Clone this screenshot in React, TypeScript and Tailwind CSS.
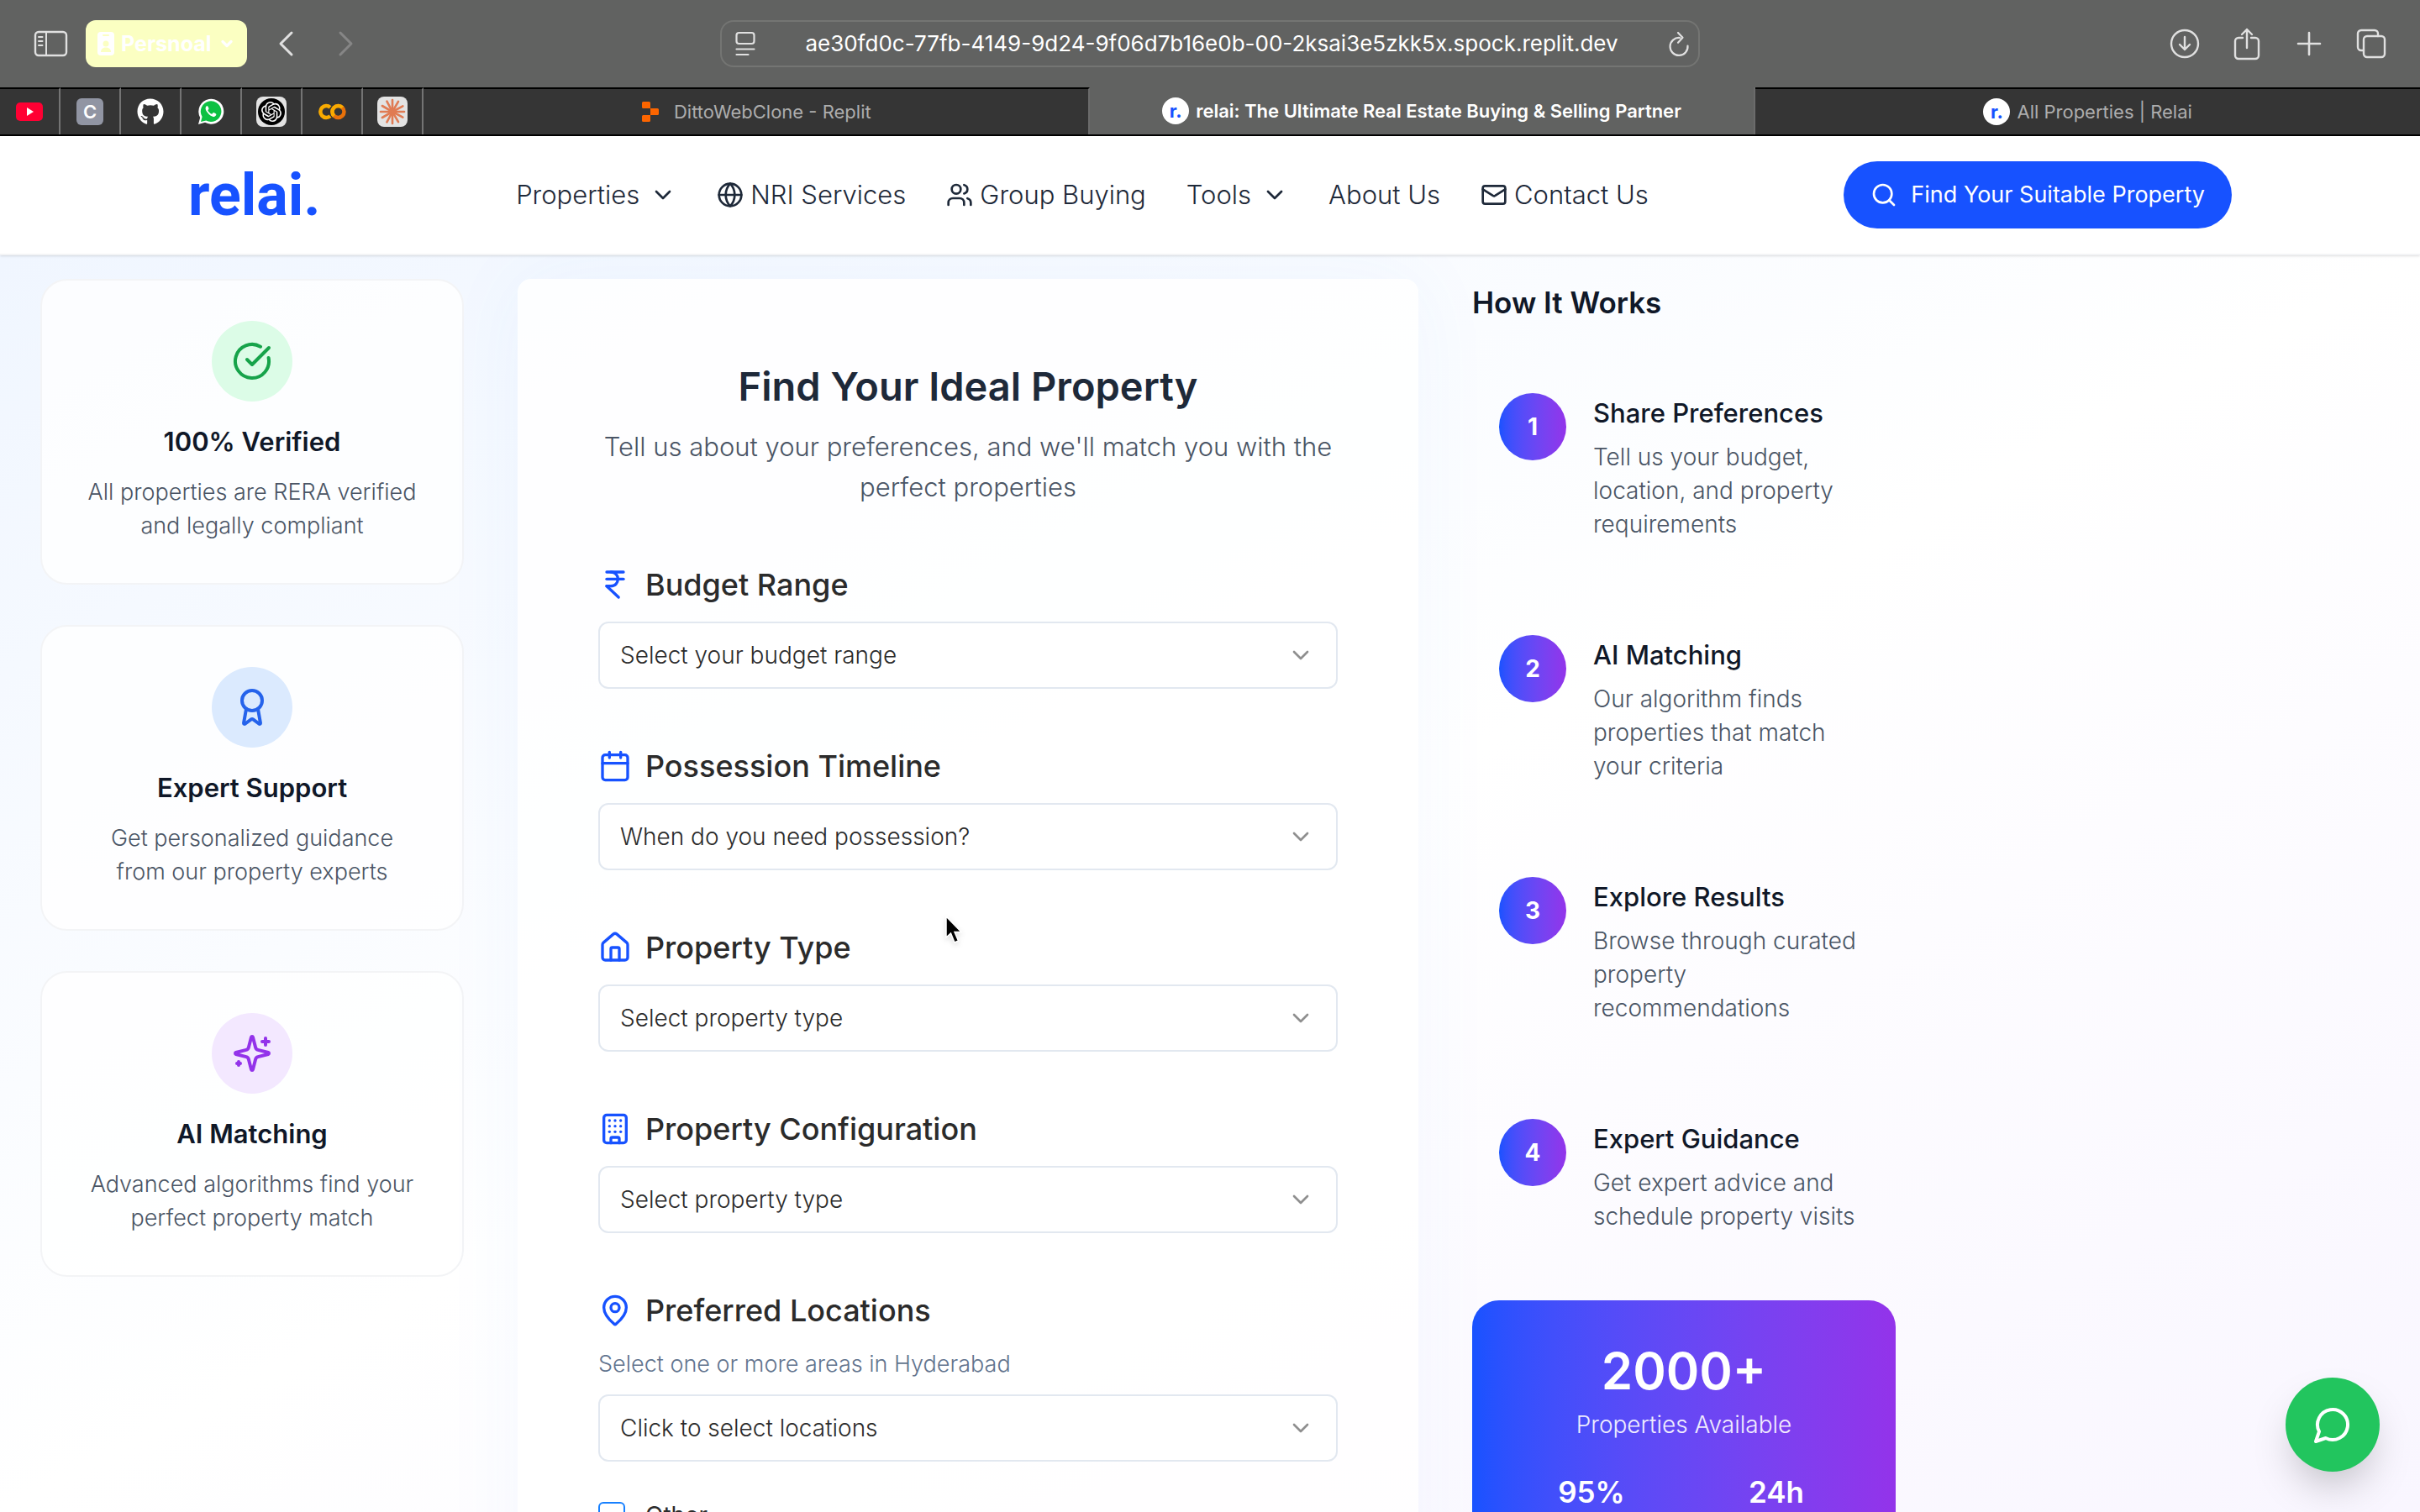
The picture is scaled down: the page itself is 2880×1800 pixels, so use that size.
import React from "react";
import {
  Award,
  Building,
  Calendar,
  ChevronDown,
  CircleCheckBig,
  Globe,
  House,
  IndianRupee,
  Mail,
  MapPin,
  Search,
  Users,
} from "lucide-react";
import { FaGithub } from "react-icons/fa";
import { SiOpenai, SiReplit } from "react-icons/si";

type IconType = React.ComponentType<{ className?: string }>;

/* ---------- Icons ---------- */

function ChromeIcon({ className, viewBox = "0 0 24 24", children }: { className: string; viewBox?: string; children: React.ReactNode }) {
  return (
    <svg
      aria-hidden="true"
      viewBox={viewBox}
      className={className}
      fill="none"
      stroke="currentColor"
      strokeWidth={2}
      strokeLinecap="round"
      strokeLinejoin="round"
    >
      {children}
    </svg>
  );
}

function Sparkles({ className = "" }: { className?: string }) {
  return (
    <ChromeIcon className={className}>
      <path d="M9.937 15.5A2 2 0 0 0 8.5 14.063l-6.135-1.582a.5.5 0 0 1 0-.962L8.5 9.936A2 2 0 0 0 9.937 8.5l1.582-6.135a.5.5 0 0 1 .963 0L14.063 8.5A2 2 0 0 0 15.5 9.937l6.135 1.581a.5.5 0 0 1 0 .964L15.5 14.063a2 2 0 0 0-1.437 1.437l-1.582 6.135a.5.5 0 0 1-.963 0z" />
      <path d="M20 3v4M22 5h-4M4 17v2M5 18H3" />
    </ChromeIcon>
  );
}

function ChatBubble({ className = "" }: { className?: string }) {
  return (
    <ChromeIcon className={className}>
      <path d="M7.900 20A9 9 0 1 0 4 16.100L2 22Z" />
    </ChromeIcon>
  );
}

/* ---------- Browser chrome ---------- */

function Toolbar() {
  return (
    <div className="grid h-[104px] shrink-0 grid-cols-[1fr_minmax(0,1166px)_1fr] items-center bg-[#616261] text-[#e0e0e0]">
      <div className="flex items-center pl-10">
        <button aria-label="Toggle sidebar" className="flex">
          <ChromeIcon className="h-8 w-[42px]" viewBox="0 0 42 32">
            <rect x="2" y="2" width="37" height="28" rx="4" strokeWidth="2.4" />
            <path d="M15 2v28M6 8h4.500M6 13h4.500M6 18h4.500" strokeWidth="2" />
          </ChromeIcon>
        </button>
        <button className="ml-5 flex h-14 items-center gap-2 rounded-xl bg-[#fbffc2] px-3.5 text-[25px] leading-8 font-bold text-white">
          <svg aria-hidden="true" viewBox="0 0 20 28" className="h-7 w-5">
            <rect width="20" height="28" rx="4" fill="#fff" />
            <rect x="6" y="3" width="8" height="2" rx="1" fill="#fbffc2" />
            <circle cx="10" cy="14" r="3.500" fill="#fbffc2" />
            <path d="M4 24c0-4 3-5.500 6-5.500s6 1.500 6 5.500z" fill="#fbffc2" />
          </svg>
          Persnoal
          <ChevronDown className="size-5" strokeWidth={4} />
        </button>
        <button aria-label="Back" className="ml-9 flex">
          <ChromeIcon className="h-8 w-5" viewBox="0 0 20 32">
            <path d="M17 3 4 16l13 13" strokeWidth="3" />
          </ChromeIcon>
        </button>
        <button aria-label="Forward" className="ml-[52px] flex text-[#868686]">
          <ChromeIcon className="h-8 w-5" viewBox="0 0 20 32">
            <path d="m3 3 13 13L3 29" strokeWidth="3" />
          </ChromeIcon>
        </button>
      </div>

      <div className="flex h-14 items-center justify-between rounded-2xl border-2 border-[#747573] pr-2.5 pl-4">
        <button aria-label="Page menu" className="flex">
          <ChromeIcon className="h-8 w-6" viewBox="0 0 24 32">
            <rect x="1.500" y="3" width="21" height="13" rx="3" strokeWidth="2.200" />
            <path d="M1.500 22.500h21M1.500 29h14" strokeWidth="2.200" />
          </ChromeIcon>
        </button>
        <input
          aria-label="Address"
          readOnly
          value="ae30fd0c-77fb-4149-9d24-9f06d7b16e0b-00-2ksai3e5zkk5x.spock.replit.dev"
          className="min-w-0 flex-1 bg-transparent text-center text-[26px] leading-8 text-white outline-none"
        />
        <button aria-label="Reload" className="flex">
          <ChromeIcon className="h-8 w-[26px]" viewBox="0 0 26 32">
            <path d="M14 9a10.500 10.500 0 1 0 9.500 9.500" strokeWidth="2.200" />
            <path d="m12 3 5.500 5.800-5.500 6" strokeWidth="2.200" />
          </ChromeIcon>
        </button>
      </div>

      <div className="flex items-center justify-end gap-[38px] pr-10">
        <button aria-label="Downloads" className="flex">
          <ChromeIcon className="size-9" viewBox="0 0 36 36">
            <circle cx="18" cy="18" r="16" strokeWidth="2.400" />
            <path d="M18 10v15m-6-6 6 6 6-6" strokeWidth="2.400" />
          </ChromeIcon>
        </button>
        <button aria-label="Share" className="flex">
          <ChromeIcon className="h-10 w-9" viewBox="0 0 36 40">
            <path d="M13 13H8a4 4 0 0 0-4 4v17a4 4 0 0 0 4 4h20a4 4 0 0 0 4-4V17a4 4 0 0 0-4-4h-5" strokeWidth="2.400" />
            <path d="M18 25V3m-6 6 6-6 6 6" strokeWidth="2.400" />
          </ChromeIcon>
        </button>
        <button aria-label="New tab" className="flex">
          <ChromeIcon className="h-8 w-9" viewBox="0 0 36 32">
            <path d="M18 3v26M5 16h26" strokeWidth="2.600" />
          </ChromeIcon>
        </button>
        <button aria-label="Show all tabs" className="flex">
          <ChromeIcon className="size-9" viewBox="0 0 36 36">
            <rect x="9" y="9" width="25" height="25" rx="4" strokeWidth="2.400" />
            <path d="M9 26H6a4 4 0 0 1-4-4V6a4 4 0 0 1 4-4h16a4 4 0 0 1 4 4v3" strokeWidth="2.400" />
          </ChromeIcon>
        </button>
      </div>
    </div>
  );
}

const rays = [0, 30, 62, 90, 118, 150, 180, 208, 240, 270, 300, 332];

const pinned: { name: string; icon: React.ReactNode }[] = [
  {
    name: "YouTube",
    icon: (
      <svg aria-hidden="true" viewBox="0 0 32 22" className="h-[22px] w-8">
        <rect width="32" height="22" rx="5" fill="#ff0033" />
        <path d="m13 6 8 5-8 5z" fill="#fff" />
      </svg>
    ),
  },
  {
    name: "C",
    icon: (
      <span className="flex size-8 items-center justify-center rounded-md bg-[#9195a3] text-[22px] leading-8 font-semibold text-white">C</span>
    ),
  },
  { name: "GitHub", icon: <FaGithub className="size-8 text-white" /> },
  {
    name: "WhatsApp",
    icon: (
      <svg aria-hidden="true" viewBox="0 0 32 32" className="size-8">
        <path d="M1 31l2.200-8A15 15 0 1 1 9 28.800z" fill="#fff" />
        <path d="M4 28l1.600-6A12.300 12.300 0 1 1 10.200 26.400z" fill="#0dc143" />
        <path
          d="M11.500 9c-.6 0-2 1.200-1.900 3.200.2 3 4.600 8.600 9.100 9.700 1.800.4 3.600-1 3.700-2.900 0-.5-3-2-3.500-2s-1.200 1.900-1.900 1.800c-1.500-.4-4-2.700-4.600-4.300-.2-.6 1.200-1.500 1.100-2.100-.1-.8-1-3.400-2-3.400z"
          fill="#fff"
        />
      </svg>
    ),
  },
  {
    name: "ChatGPT",
    icon: (
      <span className="flex size-9 items-center justify-center rounded-lg bg-[#e3e3e3]">
        <span className="flex size-8 items-center justify-center rounded-full bg-black">
          <SiOpenai className="size-6 text-white" />
        </span>
      </span>
    ),
  },
  {
    name: "Colab",
    icon: (
      <svg aria-hidden="true" viewBox="0 0 34 20" className="h-5 w-[34px]" fill="none" strokeWidth="4.500">
        <path d="M15 4.800a7 7 0 1 0 0 10.400" stroke="#f9ab00" />
        <circle cx="24.500" cy="10" r="7" stroke="#e8710a" />
        <path d="M19.500 15a7 7 0 0 1 10-10" stroke="#f9ab00" />
      </svg>
    ),
  },
  {
    name: "Claude",
    icon: (
      <span className="flex size-9 items-center justify-center rounded-lg bg-[#e3e3e3]">
        <svg aria-hidden="true" viewBox="-16 -16 32 32" className="size-8" stroke="#e07b53" strokeWidth="2.600" strokeLinecap="round">
          {rays.map((a) => (
            <line key={a} x1="0" y1="0" x2="0" y2="-14" transform={`rotate(${a})`} />
          ))}
          <circle r="3" fill="#e07b53" />
        </svg>
      </span>
    ),
  },
];

function RelaiMark() {
  return (
    <span className="flex size-8 items-center justify-center rounded-full bg-white text-[22px] leading-8 font-bold text-[#1752ff]">r.</span>
  );
}

function TabStrip() {
  return (
    <div className="flex h-[58px] shrink-0 border-b-2 border-black bg-[#353535] text-[22px] leading-8">
      {pinned.map((p) => (
        <button
          key={p.name}
          aria-label={p.name}
          className="flex w-[72px] shrink-0 items-center justify-center border-t-2 border-r-2 border-t-black border-r-[#747474]"
        >
          {p.icon}
        </button>
      ))}
      <button className="flex flex-1 items-center justify-center gap-4 border-t-2 border-r-2 border-t-black border-r-[#6b6b6b] text-[#adadad]">
        <SiReplit className="size-6 text-[#fc6500]" />
        DittoWebClone - Replit
      </button>
      <button className="flex flex-1 items-center justify-center gap-2 border-r-2 border-[#6b6b6b] bg-[#616261] font-semibold text-white">
        <RelaiMark />
        relai: The Ultimate Real Estate Buying &amp; Selling Partner
      </button>
      <button className="flex flex-1 items-center justify-center gap-2 border-t-2 border-black text-[#adadad]">
        <RelaiMark />
        All Properties | Relai
      </button>
    </div>
  );
}

/* ---------- Site ---------- */

const navItems: { label: string; icon?: IconType; menu?: boolean }[] = [
  { label: "Properties", menu: true },
  { label: "NRI Services", icon: Globe },
  { label: "Group Buying", icon: Users },
  { label: "Tools", menu: true },
  { label: "About Us" },
  { label: "Contact Us", icon: Mail },
];

function SiteHeader() {
  return (
    <header className="z-10 flex h-[142px] shrink-0 items-center justify-between border-b-2 border-gray-100 bg-white px-56 shadow-sm">
      <a href="#" className="font-['Roboto',sans-serif] text-[70px] leading-[80px] font-bold text-[#1752ff]">
        relai.
      </a>
      <nav className="flex items-center gap-12 text-[31px] leading-12 font-light text-gray-800">
        {navItems.map(({ label, icon: Icon, menu }) =>
          menu ? (
            <button key={label} className="flex items-center gap-3 whitespace-nowrap">
              {label}
              <ChevronDown className="size-8" />
            </button>
          ) : (
            <a key={label} href="#" className="flex items-center gap-2 whitespace-nowrap">
              {Icon && <Icon className="size-8" />}
              {label}
            </a>
          ),
        )}
      </nav>
      <a
        href="#"
        className="flex h-20 items-center gap-4 rounded-full bg-[#1752ff] px-8 text-[27px] leading-10 whitespace-nowrap text-white"
      >
        <Search className="size-8" />
        Find Your Suitable Property
      </a>
    </header>
  );
}

const features: { title: string; lines: [string, string]; icon: IconType; tone: string }[] = [
  {
    title: "100% Verified",
    lines: ["All properties are RERA verified", "and legally compliant"],
    icon: CircleCheckBig,
    tone: "bg-[#dcfce7] text-[#16a34a]",
  },
  {
    title: "Expert Support",
    lines: ["Get personalized guidance", "from our property experts"],
    icon: Award,
    tone: "bg-[#dbeafe] text-[#2563eb]",
  },
  {
    title: "AI Matching",
    lines: ["Advanced algorithms find your", "perfect property match"],
    icon: Sparkles,
    tone: "bg-[#f3e8ff] text-[#9333ea]",
  },
];

function Features() {
  return (
    <aside className="flex flex-col gap-12">
      {features.map(({ title, lines, icon: Icon, tone }) => (
        <article
          key={title}
          className="flex flex-col items-center rounded-4xl border-2 border-[#f3f4f6] bg-white/80 py-12 text-center"
        >
          <div className={`flex size-24 items-center justify-center rounded-full ${tone}`}>
            <Icon className="size-12" />
          </div>
          <h3 className="mt-6 text-[31px] leading-12 font-semibold text-gray-900">{title}</h3>
          <p className="mt-4 text-[27px] leading-10 font-light whitespace-nowrap text-gray-600">
            {lines[0]}
            <br />
            {lines[1]}
          </p>
        </article>
      ))}
    </aside>
  );
}

const fields: { id: string; label: string; placeholder: string; icon: IconType; hint?: string }[] = [
  { id: "budget", label: "Budget Range", placeholder: "Select your budget range", icon: IndianRupee },
  { id: "possession", label: "Possession Timeline", placeholder: "When do you need possession?", icon: Calendar },
  { id: "type", label: "Property Type", placeholder: "Select property type", icon: House },
  { id: "configuration", label: "Property Configuration", placeholder: "Select property type", icon: Building },
  {
    id: "locations",
    label: "Preferred Locations",
    placeholder: "Click to select locations",
    icon: MapPin,
    hint: "Select one or more areas in Hyderabad",
  },
];

function PropertyForm() {
  return (
    <section className="col-span-2 rounded-2xl bg-white/85 p-24 shadow-[0_0_100px_rgba(59,130,246,0.05)]">
      <header className="text-center">
        <h1 className="text-[47px] leading-16 font-semibold text-gray-800">Find Your Ideal Property</h1>
        <p className="mt-4 text-[31px] leading-12 font-light text-gray-600">
          Tell us about your preferences, and we'll match you with the perfect properties
        </p>
      </header>
      <form className="mt-16 flex flex-col gap-16">
        {fields.map(({ id, label, placeholder, icon: Icon, hint }) => (
          <div key={id} className="flex flex-col gap-4">
            <label htmlFor={id} className="flex items-center gap-4 text-[36px] leading-14 font-medium text-[#2b2b2b]">
              <Icon className="size-10 text-[#1752ff]" />
              {label}
            </label>
            {hint && <p className="text-[27px] leading-10 font-light text-slate-500">{hint}</p>}
            <div className="relative">
              <select
                id={id}
                defaultValue=""
                className="h-20 w-full appearance-none rounded-xl border-2 border-slate-200 bg-white px-6 text-[28px] leading-10 font-light text-[#2b2b2b]"
              >
                <option value="">{placeholder}</option>
              </select>
              <ChevronDown className="pointer-events-none absolute top-6 right-7 size-8 text-[#8f8f8f]" />
            </div>
            {id === "locations" && (
              <label className="mt-8 flex items-center gap-6 text-[28px] leading-8 text-[#2b2b2b]">
                <input type="checkbox" className="size-8 appearance-none rounded-md border-2 border-[#1780ff] bg-white" />
                Other
              </label>
            )}
          </div>
        ))}
      </form>
    </section>
  );
}

const steps = [
  { title: "Share Preferences", text: "Tell us your budget, location, and property requirements" },
  { title: "AI Matching", text: "Our algorithm finds properties that match your criteria" },
  { title: "Explore Results", text: "Browse through curated property recommendations" },
  { title: "Expert Guidance", text: "Get expert advice and schedule property visits" },
];

function HowItWorks() {
  return (
    <aside className="flex flex-col gap-12">
      <h2 className="text-[35px] leading-14 font-semibold text-gray-900">How It Works</h2>
      {steps.map(({ title, text }, i) => (
        <article key={title} className="flex items-start gap-8 p-8">
          <span className="flex size-20 shrink-0 items-center justify-center rounded-full bg-linear-to-r from-[#1752ff] to-[#9333ea] text-[28px] leading-10 font-bold text-white">
            {i + 1}
          </span>
          <div className="min-w-0">
            <h3 className="text-[31px] leading-12 font-medium text-gray-900">{title}</h3>
            <p className="mt-2 text-[28px] leading-10 font-light text-gray-600">{text}</p>
          </div>
        </article>
      ))}
      <div className="rounded-4xl bg-linear-to-r from-[#1752ff] to-[#9333ea] p-12 text-center text-white">
        <p className="text-[60px] leading-[72px] font-semibold">2000+</p>
        <p className="mt-2 text-[28px] leading-10 font-light text-white/90">Properties Available</p>
        <div className="mt-8 grid grid-cols-2 gap-8 text-[35px] leading-14 font-semibold">
          <p>95%</p>
          <p>24h</p>
        </div>
      </div>
    </aside>
  );
}

export default function App() {
  return (
    <div className="relative flex h-screen flex-col overflow-hidden bg-white font-['Inter',sans-serif]">
      <Toolbar />
      <TabStrip />
      <SiteHeader />
      <main className="min-h-0 flex-1 overflow-hidden bg-linear-to-br from-[#f0f6ff] via-white to-[#f9f6ff]">
        <div className="grid max-w-[2304px] grid-cols-4 items-start gap-16 px-12 pt-7">
          <Features />
          <PropertyForm />
          <HowItWorks />
        </div>
      </main>
      <button
        aria-label="Chat with us"
        className="absolute right-12 bottom-12 flex size-28 items-center justify-center rounded-full bg-[#22c55e] text-white shadow-2xl"
      >
        <ChatBubble className="size-12" />
      </button>
      <svg
        aria-hidden="true"
        viewBox="0 0 24 36"
        className="pointer-events-none absolute top-[1090px] left-[1124px] h-9 w-6 drop-shadow-md"
      >
        <path d="M2 1v25l5.500-5 4.500 11 4.500-2-4.500-10.500h8z" fill="#000" stroke="#fff" strokeWidth="1.500" />
      </svg>
    </div>
  );
}
